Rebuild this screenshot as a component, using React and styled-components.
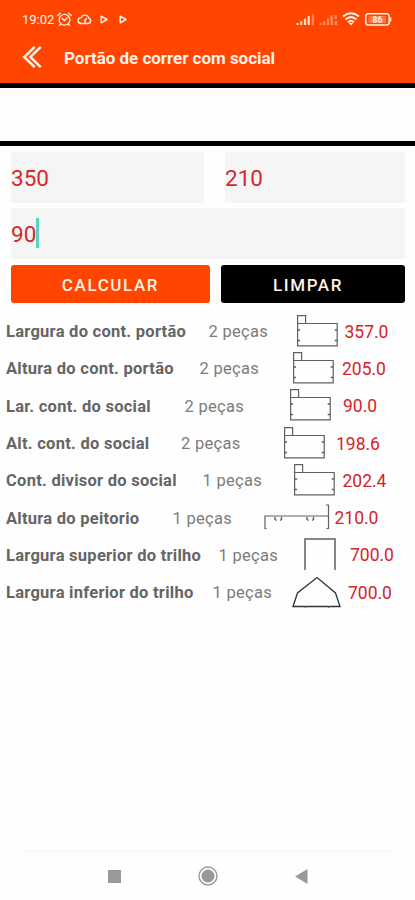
import React from "react";
import styled, { createGlobalStyle } from "styled-components";

const GlobalStyle = createGlobalStyle`
  * { box-sizing: border-box; }
  body { margin: 0; background: #fff; font-family: Roboto, sans-serif; }
`;

const Screen = styled.div`
  width: 415px;
  height: 900px;
  display: flex;
  flex-direction: column;
  overflow: hidden;
  background: #fefefe;
`;

const Header = styled.header`
  height: 88px;
  flex: none;
  background: #ff4500;
  border-bottom: 5px solid #000;
  color: #fff1e8;
`;

const StatusBar = styled.div`
  height: 36px;
  padding: 2px 23px 0 22px;
  display: flex;
  align-items: center;
  justify-content: space-between;
`;

const Clock = styled.span`
  width: 35px;
  font-size: 13px;
  white-space: nowrap;
`;

const StatusGroup = styled.div`
  display: flex;
  align-items: center;
`;

const Spacer = styled.span`
  width: ${(p) => p.$width}px;
`;

const TitleBar = styled.div`
  height: 42px;
  padding-left: 22px;
  display: flex;
  align-items: center;
  gap: 22px;
`;

const Title = styled.h1`
  margin: 1px 0 0;
  font-size: 17px;
  font-weight: 700;
  letter-spacing: -0.03px;
  line-height: 20px;
  white-space: nowrap;
`;

const AdSpace = styled.div`
  height: 58px;
  flex: none;
  border-bottom: 5px solid #000;
`;

const Form = styled.form`
  padding: 6px 10px 0 11px;
  display: flex;
  flex-direction: column;
  gap: 5px;
`;

const FieldRow = styled.div`
  display: grid;
  grid-template-columns: ${(p) => p.$columns};
  column-gap: ${(p) => p.$gap}px;
`;

const Field = styled.div`
  height: 51px;
  display: flex;
  align-items: center;
  padding-top: 1px;
  background: #f5f5f5;
  color: #d9262b;
  font-size: 22.5px;
`;

const Caret = styled.span`
  width: 3px;
  height: 30px;
  margin-top: -2px;
  background: #58d3bf;
`;

const Button = styled.button`
  height: 38px;
  margin-top: 1px;
  padding: 1px ${(p) => p.$shift || 0}px 0 0;
  border: 0;
  border-radius: 3px;
  background: ${(p) => p.$color};
  color: #fff3ea;
  font: 500 17px Roboto, sans-serif;
  letter-spacing: 1.6px;
`;

const Results = styled.section`
  padding: 10px 0 0 6px;
`;

const ResultRow = styled.div`
  height: 37.3px;
  display: grid;
  grid-template-columns: ${(p) => p.$columns};
  align-items: center;
  white-space: nowrap;
`;

const Label = styled.span`
  color: #656565;
  font-size: 16.5px;
  font-weight: 700;
  letter-spacing: 0.26px;
`;

const Quantity = styled.span`
  padding-left: 0.5px;
  color: #7c7c7c;
  font-size: 16.5px;
  letter-spacing: 0.3px;
`;

const Value = styled.span`
  padding-left: 0.5px;
  color: #d5232a;
  font-size: 17.5px;
`;

const Profile = styled.svg`
  display: block;
  overflow: visible;
  margin-top: -2px;
  fill: none;
  stroke: #606060;
  stroke-width: 1.2;
`;

const NavigationBar = styled.nav`
  height: 50px;
  margin: auto 19px 0;
  border-top: 2px solid #f9f9f9;
  display: grid;
  grid-template-columns: 89px 24px 66px 20px 77px 1fr;
  align-items: center;
`;

const NavIcon = styled.svg`
  display: block;
  grid-column: ${(p) => p.$column};
  grid-row: 1;
`;

const AlarmIcon = () => (
  <svg width="15" height="15" viewBox="0 0 15 15" fill="none" stroke="currentColor" strokeWidth="1.3" strokeLinecap="round">
    <circle cx="7.5" cy="7.8" r="5.4" />
    <path d="M.8 3.5 3.3 1.2M14.2 3.5l-2.5-2.3M5.2 6.5l2.4 2 2.7-2.7M3.7 12l-1.2 1.4M11.3 12l1.2 1.4" />
  </svg>
);

const CloudIcon = () => (
  <svg width="15" height="11" viewBox="0 0 15 11" fill="none" stroke="currentColor" strokeWidth="1.4">
    <path d="M4 9.500h7a2.700 2.700 0 0 0 .7-5.300C11 .4 5.400 0 4.200 3.600.2 3.800 0 9.200 4 9.500ZM8 9.300V6.700q0-2 2-2" />
  </svg>
);

const PlayIcon = () => (
  <svg width="8" height="9" viewBox="0 0 8 9" fill="none" stroke="currentColor" strokeWidth="1.5" strokeLinejoin="round">
    <path d="M1.200 1.200v6.600l5.800-3.300Z" />
  </svg>
);

const SignalIcon = ({ weak }) => (
  <svg width="19" height="13" viewBox="0 0 19 13" stroke="currentColor" strokeWidth="2.2" opacity={weak ? 0.42 : 0.9}>
    <path d="M1.500 12v-2M5.200 12V8.200M9 12V5.700M12.700 12V3" />
    <path d="M16.800 12V1" opacity={weak ? 1 : 0.4} strokeDasharray={weak ? "4 2" : "none"} />
    {weak && <path d="m10.500 2 4 4m0-4-4 4" strokeWidth="1" />}
  </svg>
);

const WifiIcon = () => (
  <svg width="18" height="14" viewBox="0 0 18 14" fill="none" stroke="currentColor" strokeWidth="2">
    <path d="M1 4.500c5-4 11-4 16 0M3.500 7.500c3.500-3 7.500-3 11 0M6 10.200c2-1.600 4-1.600 6 0" />
    <path d="m6.800 11 2.200 2.500 2.200-2.500Z" fill="currentColor" stroke="none" />
  </svg>
);

const BatteryIcon = () => (
  <svg width="27" height="13" viewBox="0 0 27 13">
    <rect x=".8" y=".8" width="23.400" height="11.200" rx="2.800" fill="none" stroke="currentColor" strokeWidth="1.500" />
    <path d="M25.500 4.500v4" stroke="currentColor" strokeWidth="1.600" />
    <rect x="3.500" y="3" width="17.500" height="7" rx="1" fill="#ffb48d" opacity=".45" />
    <text x="12.500" y="9.500" textAnchor="middle" fill="currentColor" fontSize="8.500" fontWeight="700" fontFamily="Roboto, sans-serif">86</text>
  </svg>
);

const BackIcon = () => (
  <svg width="20" height="22" viewBox="0 0 20 22" fill="none" stroke="currentColor" strokeWidth="2.500">
    <path d="M12.700.8 2.200 11l10.500 10.200M18.800.8 8.300 11l10.500 10.200" />
  </svg>
);

const BoxProfile = () => (
  <Profile width="41" height="32" viewBox="0 0 41 32">
    <path d="M.6 8.500V.6h8v7.900M.6 8.500h39.600v22.400H.6Z" />
    <path d="M.6 15h2.500M.6 25.500h2.500M40.200 15h-2.500M40.200 25.500h-2.500" strokeWidth="1.500" />
  </Profile>
);

const SillProfile = () => (
  <Profile width="66" height="26" viewBox="0 0 66 26">
    <path d="M2.600 24.500H1V12h63.500M61.800 1h2.700v23.500h-2" />
    <path d="M11 13v2.500l1.500 1M17.500 13v2.500l-1.500 1M43 13v2.500l1.500 1M49.500 13v2.500l-1.500 1" strokeWidth="1.400" />
  </Profile>
);

const ChannelProfile = () => (
  <Profile width="32" height="32" viewBox="0 0 32 32">
    <path d="M1 32V1h30v31" strokeWidth="1.500" />
  </Profile>
);

const RailProfile = () => (
  <Profile width="49" height="32" viewBox="0 0 49 32">
    <path d="M1 30.500 5.500 17 25 1.500 43.500 17 48 30.500Z" stroke="#333" strokeWidth="1.300" />
    <path d="M13.500 30v2M36.500 30v2" />
  </Profile>
);

const profiles = { box: BoxProfile, sill: SillProfile, channel: ChannelProfile, rail: RailProfile };

const results = [
  { label: "Largura do cont. portão", count: 2, value: "357.0", profile: "box", columns: "202px 89px 47px 1fr" },
  { label: "Altura do cont. portão", count: 2, value: "205.0", profile: "box", columns: "193px 93.5px 49px 1fr" },
  { label: "Lar. cont. do social", count: 2, value: "90.0", profile: "box", columns: "178px 105.5px 53px 1fr" },
  { label: "Alt. cont. do social", count: 2, value: "198.6", profile: "box", columns: "174.5px 103.5px 51.5px 1fr" },
  { label: "Cont. divisor do social", count: 1, value: "202.4", profile: "box", columns: "196px 92px 48px 1fr" },
  { label: "Altura do peitorio", count: 1, value: "210.0", profile: "sill", columns: "166px 92px 70px 1fr" },
  { label: "Largura superior do trilho", count: 1, value: "700.0", profile: "channel", columns: "212px 86px 45.5px 1fr" },
  { label: "Largura inferior do trilho", count: 1, value: "700.0", profile: "rail", columns: "206px 80px 55.5px 1fr" },
];

export default function App() {
  return (
    <>
      <GlobalStyle />
      <Screen>
        <Header>
          <StatusBar>
            <StatusGroup>
              <Clock>19:02</Clock>
              <AlarmIcon />
              <Spacer $width={5} />
              <CloudIcon />
              <Spacer $width={8} />
              <PlayIcon />
              <Spacer $width={11} />
              <PlayIcon />
            </StatusGroup>
            <StatusGroup>
              <SignalIcon />
              <Spacer $width={4} />
              <SignalIcon weak />
              <Spacer $width={4} />
              <WifiIcon />
              <Spacer $width={5} />
              <BatteryIcon />
            </StatusGroup>
          </StatusBar>
          <TitleBar>
            <BackIcon />
            <Title>Portão de correr com social</Title>
          </TitleBar>
        </Header>
        <AdSpace />
        <Form>
          <FieldRow $columns="193px 180px" $gap={21}>
            <Field>350</Field>
            <Field>210</Field>
          </FieldRow>
          <Field>90<Caret /></Field>
          <FieldRow $columns="199px 184px" $gap={11}>
            <Button type="button" $color="#ff4500">CALCULAR</Button>
            <Button type="button" $color="#000" $shift={10}>LIMPAR</Button>
          </FieldRow>
        </Form>
        <Results>
          {results.map(({ label, count, value, profile, columns }) => {
            const Drawing = profiles[profile];
            return (
              <ResultRow key={label} $columns={columns}>
                <Label>{label}</Label>
                <Quantity>{count} peças</Quantity>
                <Drawing />
                <Value>{value}</Value>
              </ResultRow>
            );
          })}
        </Results>
        <NavigationBar>
          <NavIcon $column={2} width="13" height="13"><path d="M0 0h13v13H0Z" fill="#999" /></NavIcon>
          <NavIcon $column={4} width="20" height="20" viewBox="0 0 20 20">
            <circle cx="10" cy="10" r="9" fill="none" stroke="#999" strokeWidth="1.4" />
            <circle cx="10" cy="10" r="6.5" fill="#999" />
          </NavIcon>
          <NavIcon $column={6} width="13" height="15"><path d="M0 7.5 12.5 0v15Z" fill="#999" /></NavIcon>
        </NavigationBar>
      </Screen>
    </>
  );
}
